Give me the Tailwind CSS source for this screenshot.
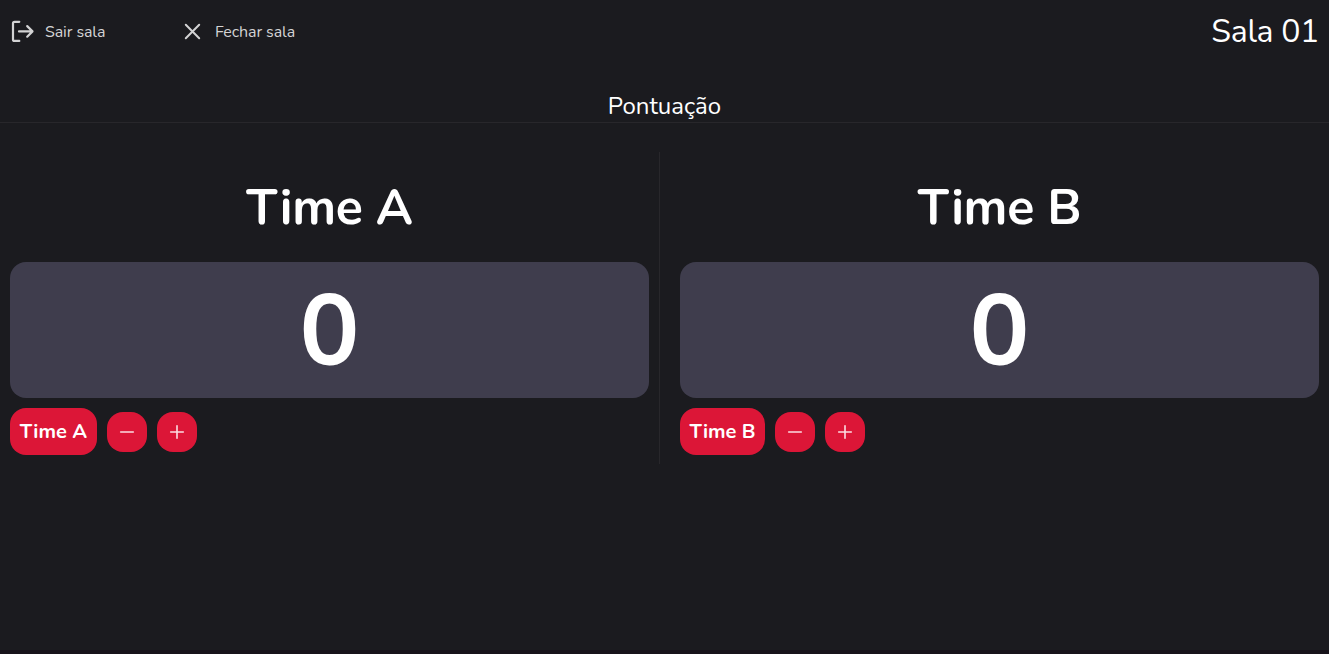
<!DOCTYPE html>
<html lang="pt-BR">
<head>
<meta charset="utf-8">
<title>Sala 01</title>
<script src="https://cdn.jsdelivr.net/npm/@tailwindcss/browser@4"></script>
</head>
<body class="h-screen overflow-hidden bg-[#1b1b1f] font-[Nunito,Lato,sans-serif] leading-[1.364] text-white antialiased">
<div class="flex h-[650px] flex-col">
  <header class="flex h-[62px] shrink-0 items-center px-2.5">
    <button class="flex w-[172px] items-center gap-[9px] text-[#d3d3d4]">
      <svg class="size-[26px]" viewBox="0 0 26 26" fill="none" stroke="currentColor" stroke-width="2.200" stroke-linecap="round" stroke-linejoin="round"><path d="M9.300 3.800H4.500Q3 3.800 3 5.300V21.400Q3 22.900 4.500 22.900H9.300M9 13.400H22M17.200 8.100L22.500 13.400L17.200 18.700"/></svg>
      <span class="pt-[3px] tracking-[-0.1px]">Sair sala</span>
    </button>
    <button class="flex items-center gap-[13px] text-[#d3d3d4]">
      <svg class="size-5" viewBox="0 0 20 20" fill="none" stroke="currentColor" stroke-width="2" stroke-linecap="round"><path d="M3.800 3.800L17.200 17.200M17.200 3.800L3.800 17.200"/></svg>
      <span class="pt-[3px] tracking-[-0.1px]">Fechar sala</span>
    </button>
    <div class="ml-auto pt-0.5 text-[32px] font-normal tracking-[-0.3px]">Sala 01</div>
  </header>
  <div class="flex h-[61px] shrink-0 items-end justify-center border-b border-[#28272b]">
    <h2 class="-mb-px text-[24px] font-normal">Pontuação</h2>
  </div>
  <main class="mt-[29px] flex h-[312px] shrink-0">
    <section class="flex w-[660px] flex-col border-r border-[#28272b] px-2.5">
      <h1 class="flex h-[110px] items-center justify-center pt-0.5 text-[50px] font-bold tracking-[-0.3px]">Time A</h1>
      <div class="flex h-[136px] items-center justify-center rounded-2xl bg-[#3f3d4d] pt-0.5 text-[100px] font-bold">0</div>
      <div class="mt-2.5 flex items-center gap-2.5">
        <button class="flex h-[47px] w-[87px] items-center justify-center rounded-2xl bg-[#dc1637] text-[20px] font-bold whitespace-nowrap">Time A</button>
        <button class="flex size-10 items-center justify-center rounded-2xl bg-[#dc1637] text-[#fbdde2]"><svg class="size-4" viewBox="0 0 16 16" stroke="currentColor" stroke-width="1.600" stroke-linecap="round"><path d="M1.700 8H14.300"/></svg></button>
        <button class="flex size-10 items-center justify-center rounded-2xl bg-[#dc1637] text-[#fbdde2]"><svg class="size-4" viewBox="0 0 16 16" stroke="currentColor" stroke-width="1.600" stroke-linecap="round"><path d="M1.700 8H14.300M8 1.700V14.300"/></svg></button>
      </div>
    </section>
    <section class="flex w-[669px] flex-col pr-2.5 pl-5">
      <h1 class="flex h-[110px] items-center justify-center pt-0.5 text-[50px] font-bold tracking-[-0.3px]">Time B</h1>
      <div class="flex h-[136px] items-center justify-center rounded-2xl bg-[#3f3d4d] pt-0.5 text-[100px] font-bold">0</div>
      <div class="mt-2.5 flex items-center gap-2.5">
        <button class="flex h-[47px] w-[85px] items-center justify-center rounded-2xl bg-[#dc1637] text-[20px] font-bold whitespace-nowrap">Time B</button>
        <button class="flex size-10 items-center justify-center rounded-2xl bg-[#dc1637] text-[#fbdde2]"><svg class="size-4" viewBox="0 0 16 16" stroke="currentColor" stroke-width="1.600" stroke-linecap="round"><path d="M1.700 8H14.300"/></svg></button>
        <button class="flex size-10 items-center justify-center rounded-2xl bg-[#dc1637] text-[#fbdde2]"><svg class="size-4" viewBox="0 0 16 16" stroke="currentColor" stroke-width="1.600" stroke-linecap="round"><path d="M1.700 8H14.300M8 1.700V14.300"/></svg></button>
      </div>
    </section>
  </main>
</div>
<footer class="h-1 bg-[#17131a]"></footer>
</body>
</html>
